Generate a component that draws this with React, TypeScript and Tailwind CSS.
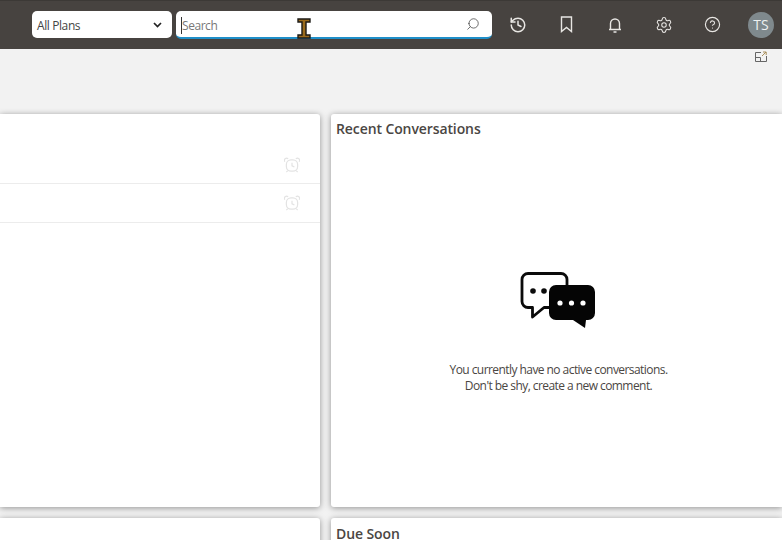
import { CircleHelp, History, Search, Settings } from 'lucide-react';

const font = { fontFamily: '"Open Sans", "Noto Sans", sans-serif' };

function AlarmIcon() {
  return (
    <svg width="16" height="16" viewBox="0 0 17 16" fill="none" stroke="#e3e3e3" strokeWidth="1.3">
      <rect x="2.5" y="2.5" width="12" height="12" rx="5" />
      <path d="M8.5 5.5V9l2.5 1" />
      <path d="M1 4.5a2.2 2.2 0 0 1 3.4-3M16 4.5a2.2 2.2 0 0 0-3.4-3" />
      <path d="M4 14l-1.5 1.5M13 14l1.5 1.5" />
    </svg>
  );
}

function ChatIcon() {
  return (
    <svg width="78" height="60" viewBox="0 0 78 60">
      <path
        d="M8 2.5h33a6 6 0 0 1 6 6v22a6 6 0 0 1-6 6H24L12.5 46V36.500H8a6 6 0 0 1-6-6v-22a6 6 0 0 1 6-6z"
        fill="#fff"
        stroke="#0b0b0b"
        strokeWidth="2.8"
        strokeLinejoin="round"
      />
      <circle cx="13" cy="20" r="2.8" fill="#0b0b0b" />
      <circle cx="24" cy="20" r="2.8" fill="#0b0b0b" />
      <path
        d="M36 14h32a7 7 0 0 1 7 7v21a7 7 0 0 1-7 7h-2l-1 8-12-8H36a7 7 0 0 1-7-7V21a7 7 0 0 1 7-7z"
        fill="#050505"
      />
      <circle cx="40" cy="32" r="2.6" fill="#fff" />
      <circle cx="51.500" cy="32" r="2.6" fill="#fff" />
      <circle cx="63" cy="32" r="2.6" fill="#fff" />
    </svg>
  );
}

function IBeam() {
  return (
    <svg className="absolute left-[297px] top-[17px]" width="14" height="21" viewBox="0 0 14 21">
      <path d="M1 1h12v3H9v13h4v3H1v-3h4V4H1z" fill="#9a6b1c" stroke="#1c1a16" strokeWidth="1.4" />
    </svg>
  );
}

function ToolbarIcon({ children }: { children: React.ReactNode }) {
  return <div className="flex w-[48.5px] justify-center text-[#e8e6e3]">{children}</div>;
}

function Header() {
  return (
    <header className="relative flex h-[49px] items-center border-t border-[#3c3936] bg-[#474340] pb-[1px] pl-[32px]">
      <div className="flex h-[27px] w-[140px] items-center justify-between rounded-[5px] bg-white pl-[5px] pr-[10px] text-[12px] tracking-[-0.4px] text-[#444]">
        <span className="pt-[2px]">All Plans</span>
        <svg width="9" height="6" viewBox="0 0 9 6" fill="none" stroke="#222" strokeWidth="1.7">
          <path d="M1 1l3.500 3.500L8 1" />
        </svg>
      </div>
      <div className="ml-[4px] mt-[1px] flex h-[28px] w-[316px] items-center justify-between rounded-[5px] border-b-2 border-[#1f8fc9] bg-white pl-[5px] pr-[12px] text-[12px] tracking-[-0.45px] text-[#777]">
        <span className="mt-[2px] border-l border-[#333] leading-[17px]">Search</span>
        <Search size={14} strokeWidth={1.3} className="-scale-x-100 text-[#444]" />
      </div>
      <div className="ml-[2px] flex items-center">
        <ToolbarIcon>
          <History size={18} strokeWidth={2} />
        </ToolbarIcon>
        <ToolbarIcon>
          <svg width="13" height="17" viewBox="0 0 13 17" fill="none" stroke="currentColor" strokeWidth="1.4">
            <path d="M1.500 1h10v14.500l-5-4-5 4z" />
          </svg>
        </ToolbarIcon>
        <ToolbarIcon>
          <svg width="14" height="16" viewBox="0 0 14 16" fill="none" stroke="currentColor" strokeWidth="1.4">
            <path d="M2.500 12V6.500a4.500 4.500 0 0 1 9 0V12" />
            <path d="M1 12.500h12M5.500 15h3" />
          </svg>
        </ToolbarIcon>
        <ToolbarIcon>
          <Settings size={18} strokeWidth={1.4} />
        </ToolbarIcon>
        <ToolbarIcon>
          <CircleHelp size={17} strokeWidth={1.6} />
        </ToolbarIcon>
      </div>
      <div className="ml-[11.5px] flex h-[26px] w-[26px] items-center justify-center rounded-full bg-[#7f898d] text-[14px] text-[#eef0f0]">
        TS
      </div>
      <IBeam />
    </header>
  );
}

function ReminderRow({ height }: { height: string }) {
  return (
    <div className={`flex items-center justify-end border-b border-[#ececec] pr-[20px] ${height}`}>
      <AlarmIcon />
    </div>
  );
}

export default function App() {
  return (
    <div className="h-[540px] w-[782px] overflow-hidden bg-[#f2f2f2]" style={font}>
      <Header />
      <div className="flex h-[17px] justify-end pr-[15px] pt-[2px]">
        <svg width="12" height="11" viewBox="0 0 12 11" fill="none" stroke="#666" strokeWidth="1">
          <path d="M6 1.500H.5v9h11V5" />
          <path d="M.5 6.500h5v4" />
          <path d="M7 5l4-4M8 1h3.200v3" stroke="#a98f5a" />
        </svg>
      </div>
      <div className="grid grid-cols-[320px_451px] gap-x-[11px] gap-y-[11px] pt-[48px]">
        <section className="h-[393px] rounded-r-[3px] bg-white pt-[32px] shadow-[0_1px_6px_rgba(0,0,0,0.4)]">
          <ReminderRow height="h-[38px]" />
          <ReminderRow height="h-[39px]" />
        </section>
        <section className="flex h-[393px] flex-col rounded-l-[3px] bg-white pl-[5px] pt-[5px] shadow-[0_1px_6px_rgba(0,0,0,0.4)]">
          <h2 className="text-[14px] font-semibold leading-[19px] tracking-[-0.1px] text-[#4a4643]">
            Recent Conversations
          </h2>
          <div className="mt-[133px] flex w-[445px] flex-col items-center">
            <ChatIcon />
            <p className="mt-[31px] text-center text-[12px] leading-[16px] tracking-[-0.56px] text-[#4a4643]">
              You currently have no active conversations.
              <br />
              Don't be shy, create a new comment.
            </p>
          </div>
        </section>
        <section className="h-[60px] rounded-r-[3px] bg-white shadow-[0_1px_6px_rgba(0,0,0,0.4)]" />
        <section className="h-[60px] rounded-l-[3px] bg-white pl-[5px] pt-[9px] shadow-[0_1px_6px_rgba(0,0,0,0.4)]">
          <h2 className="text-[14px] font-semibold leading-[13px] tracking-[-0.1px] text-[#4a4643]">Due Soon</h2>
        </section>
      </div>
    </div>
  );
}
